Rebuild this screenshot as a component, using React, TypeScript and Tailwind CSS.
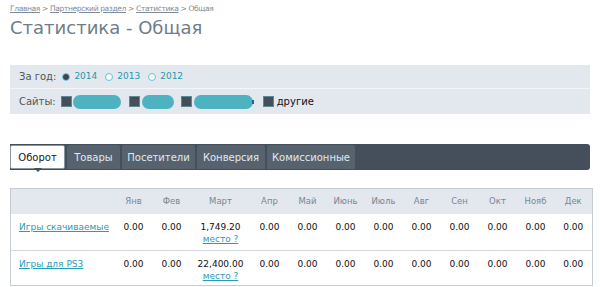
import React, { useState } from "react";

const months = ["Янв", "Фев", "Март", "Апр", "Май", "Июнь", "Июль", "Авг", "Сен", "Окт", "Нояб", "Дек"];

const rows = [
  { name: "Игры скачиваемые", march: "1,749.20" },
  { name: "Игры для PS3", march: "22,400.00" },
];

const tabs = [
  { label: "Оборот", w: "w-[55px]" },
  { label: "Товары", w: "w-[53px]" },
  { label: "Посетители", w: "w-[73px]" },
  { label: "Конверсия", w: "w-[68px]" },
  { label: "Комиссионные", w: "w-[88px]" },
];

const Radio = ({ checked }: { checked: boolean }) => (
  <span className="w-[8px] h-[8px] rounded-full border border-[#5cc6d3] bg-white flex items-center justify-center">
    {checked && <span className="w-[6px] h-[6px] rounded-full bg-[#3c4650]" />}
  </span>
);

// site checkbox + blurred (hidden) site name
const Box = () => <span className="block w-[11px] h-[11px] bg-[#454f59] border border-[#5a8a96] shrink-0" />;

const Blob = ({ w }: { w: string }) => <span className={`block ${w} h-[14px] rounded-full bg-[#4db3c0] shrink-0`} />;

const App = () => {
  const [year, setYear] = useState(2014);
  const [active, setActive] = useState(0);

  return (
    <div className="w-[600px] h-[287px] bg-white overflow-hidden px-[10px] pt-[3px] text-[#333]" style={{ fontFamily: '"DejaVu Sans", Verdana, sans-serif' }}>
      {/* breadcrumbs */}
      <div className="text-[7.5px] tracking-[-0.35px] text-[#888] leading-[11px]">
        <a className="underline text-[#7d8a97]">Главная</a> &gt; <a className="underline text-[#7d8a97]">Партнерский раздел</a> &gt;{" "}
        <a className="underline text-[#7d8a97]">Статистика</a> &gt; Общая
      </div>
      <h1 className="text-[18px] leading-[26px] text-[#6f7d8b] mt-[1px]">Статистика - Общая</h1>

      {/* filter */}
      <div className="mt-[24px] bg-[#e2e8ee] text-[10px]">
        <div className="h-[24px] flex items-center pl-[9px] border-b border-[#f4f6f8] gap-[4px]">
          <span className="text-[#555] mr-[2px]">За год:</span>
          {[2014, 2013, 2012].map((y) => (
            <label key={y} className="flex items-center gap-[4px] mr-[4px] cursor-pointer" onClick={() => setYear(y)}>
              <Radio checked={year === y} />
              <span className="text-[#1e98ad] text-[9px]">{y}</span>
            </label>
          ))}
        </div>
        <div className="h-[25px] flex items-center pl-[9px]">
          <span className="text-[#555] mr-[5px]">Сайты:</span>
          <Box />
          <span className="ml-[1px]"><Blob w="w-[48px]" /></span>
          <span className="ml-[8px]"><Box /></span>
          <span className="ml-[2px]"><Blob w="w-[32px]" /></span>
          <span className="ml-[7px]"><Box /></span>
          <span className="ml-[2px] flex items-center"><Blob w="w-[59px]" /><span className="block w-[2px] h-[4px] bg-[#2b5fa0] ml-[-1px]" /></span>
          <span className="ml-[9px]"><Box /></span>
          <span className="ml-[3px] text-[#111]">другие</span>
        </div>
      </div>

      {/* tabs */}
      <div className="mt-[30px] h-[26px] bg-[#444f5b] rounded-r-[3px] flex items-stretch gap-[2px] pt-[1px] pb-[1px] text-[10px] relative">
        {tabs.map((t, i) => (
          <button
            key={t.label}
            onClick={() => setActive(i)}
            className={`${t.w} flex items-center justify-center rounded-t-[2px] relative ${
              i === active ? "bg-white text-[#222] border border-[#8b959f] rounded-[2px]" : "bg-[#56636f] text-[#e3e8ec]"
            }`}
          >
            {t.label}
            {i === active && (
              <span className="absolute left-1/2 -translate-x-1/2 top-full w-0 h-0 border-l-[4px] border-r-[4px] border-t-[4px] border-l-transparent border-r-transparent border-t-[#444f5b]" />
            )}
          </button>
        ))}
      </div>

      {/* table */}
      <table className="mt-[18px] w-[583px] border-collapse border border-[#c5ccd3] text-[9px] table-fixed">
        <colgroup>
          <col className="w-[104px]" />
          <col className="w-[38px]" />
          <col className="w-[38px]" />
          <col className="w-[60px]" />
          {months.slice(3).map((m) => (
            <col key={m} className="w-[38px]" />
          ))}
        </colgroup>
        <thead>
          <tr className="bg-[#e2e8ee] h-[25px]">
            <th />
            {months.map((m) => (
              <th key={m} className="font-normal text-[#7a8692] text-[8.5px]">
                {m}
              </th>
            ))}
          </tr>
        </thead>
        <tbody>
          {rows.map((r, ri) => (
            <tr key={r.name} className={`${ri === 0 ? "h-[37px] border-b border-[#d3d8dd]" : "h-[35px]"} align-top`}>
              <td className="pl-[8px] pt-[7px]">
                <a className="underline text-[#2a9cb6] whitespace-nowrap">{r.name}</a>
              </td>
              {months.map((m, i) => (
                <td key={m} className="text-center pt-[7px] text-[#111] leading-[12px]">
                  {i === 2 ? (
                    <>
                      <div>{r.march}</div>
                      <a className="underline text-[#2a9cb6]">место ?</a>
                    </>
                  ) : (
                    "0.00"
                  )}
                </td>
              ))}
            </tr>
          ))}
        </tbody>
      </table>
    </div>
  );
};

export default App;
